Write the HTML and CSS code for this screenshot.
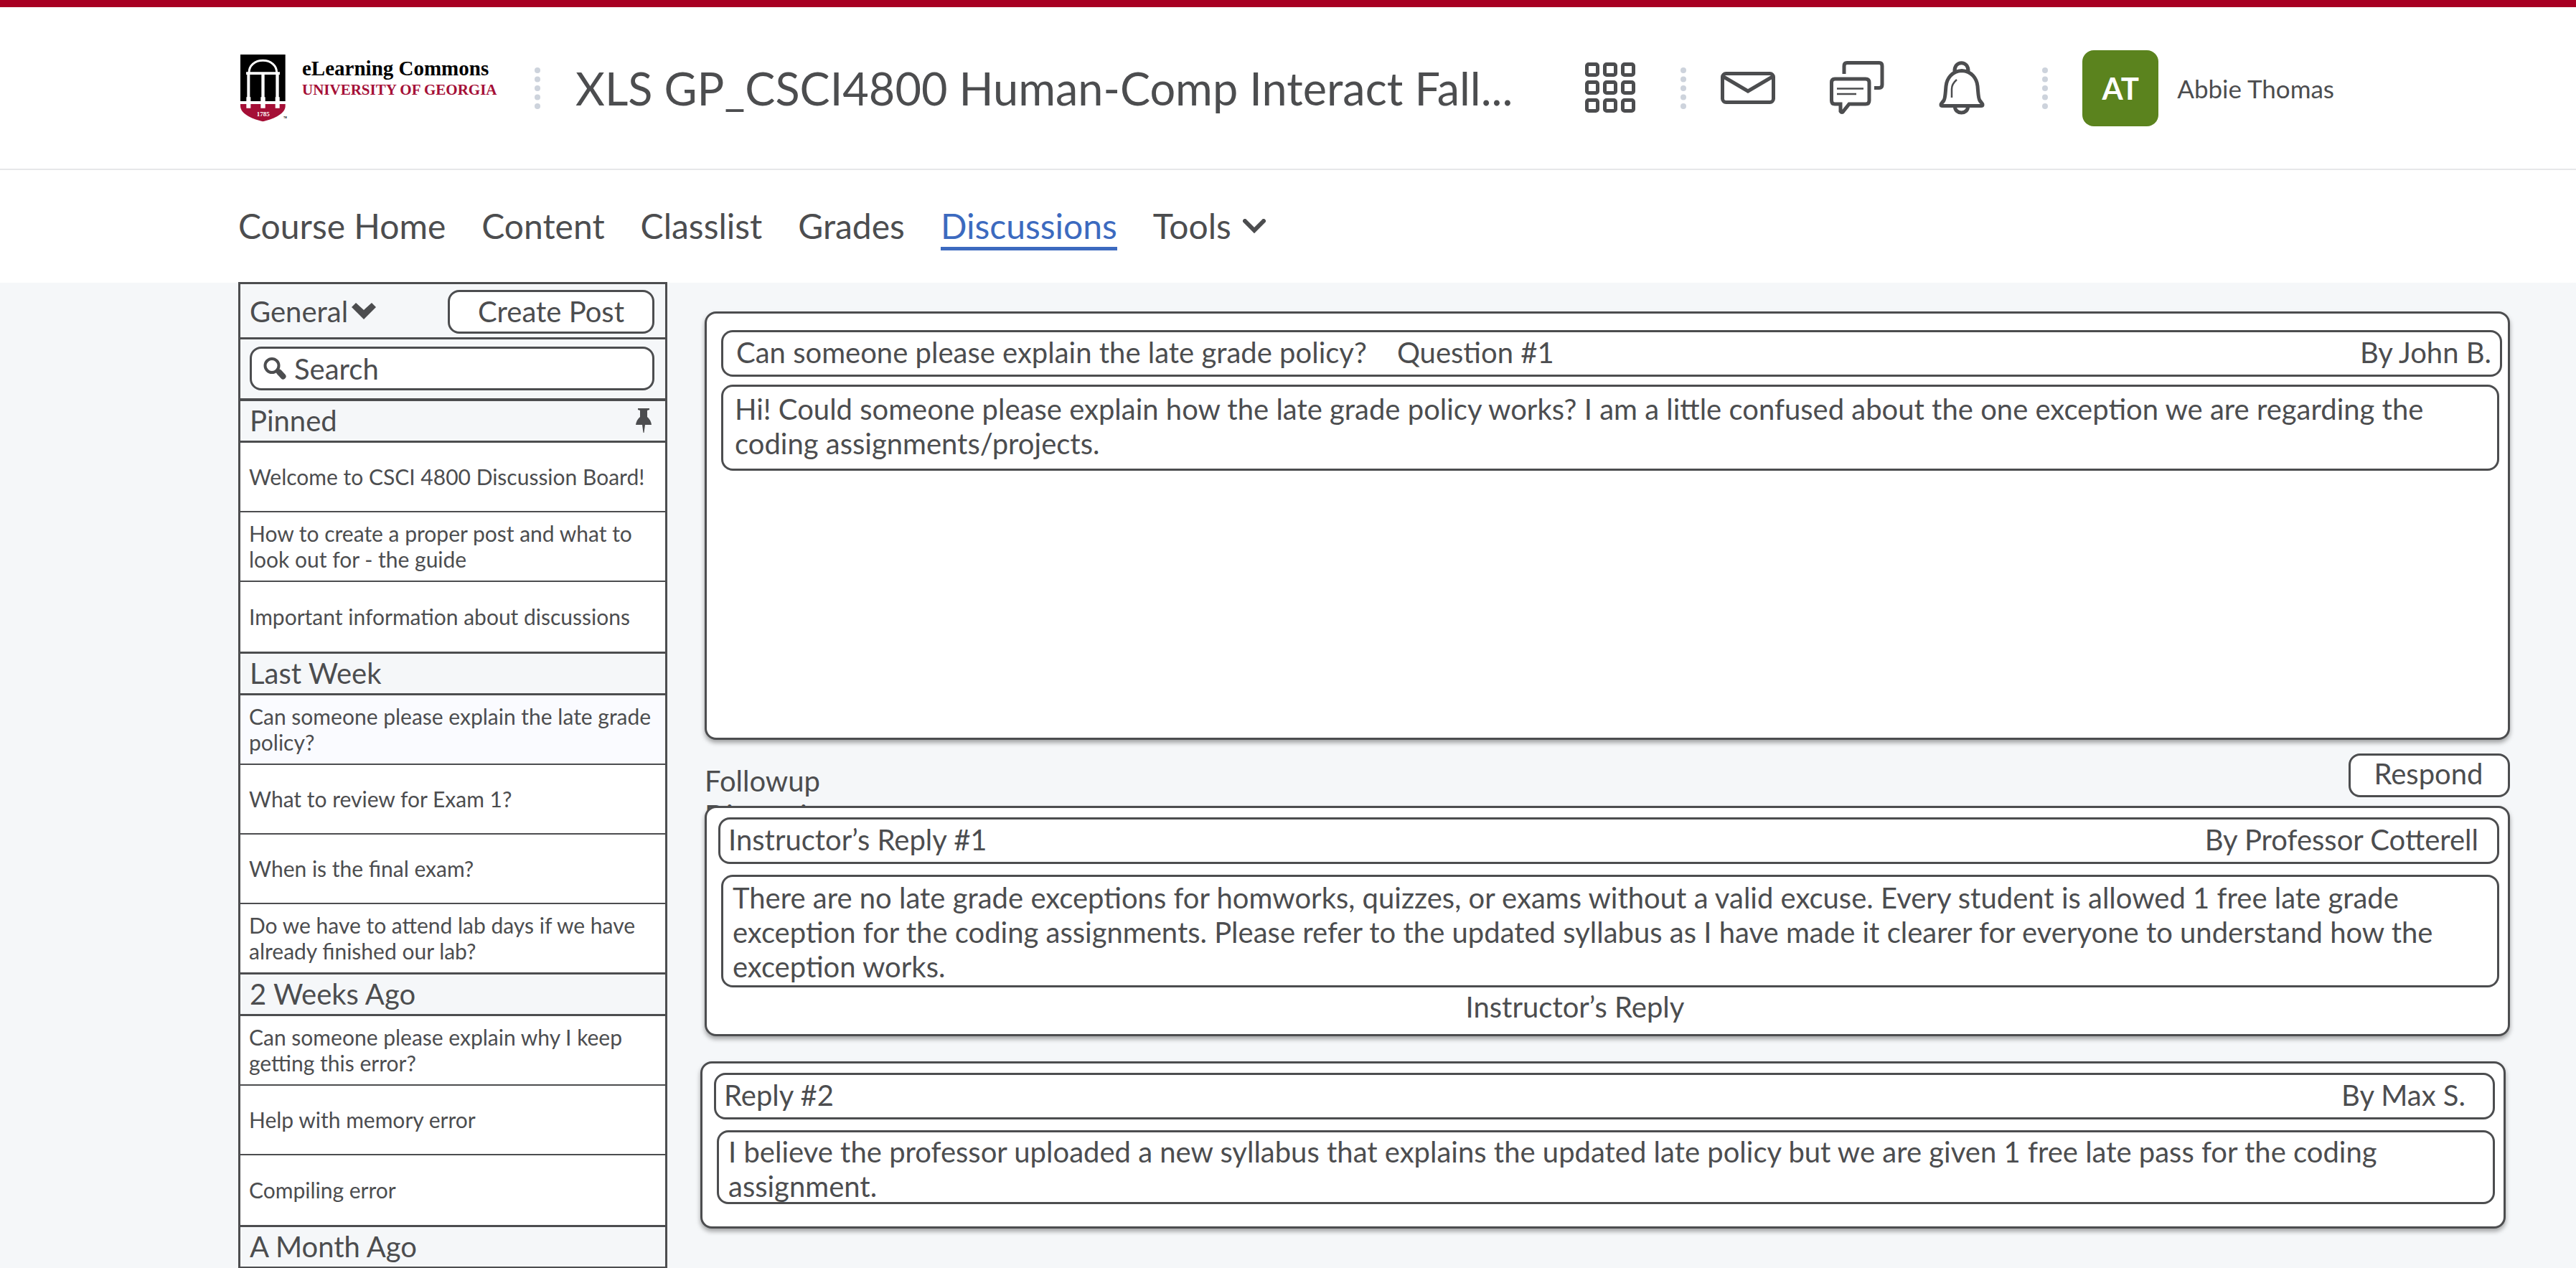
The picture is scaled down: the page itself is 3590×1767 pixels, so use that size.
FILE: index.html
```html
<!DOCTYPE html>
<html lang="en">
<head>
<meta charset="utf-8">
<title>Discussions - eLearning Commons</title>
<link rel="stylesheet" href="styles.css">
</head>
<body>
<header class="topbar">
  <a class="brand" href="#">
    <svg class="crest" viewBox="0 0 201 282" aria-hidden="true">
      <path d="M0 0H188V195H0Z" fill="#000"/>
      <path d="M0 207H188V216C188 250 130 272 94 280C58 272 0 250 0 216Z" fill="#a50f36"/>
      <path d="M36 76C36 46 60 25 94 25S152 46 152 76" fill="none" stroke="#fff" stroke-width="9"/>
      <path d="M24 73H165V84H24ZM28 84H40V178H43V224H25V178H28ZM88 84H101V178H104V224H85V178H88ZM148 84H161V178H164V224H146V178H148Z" fill="#fff"/>
      <text x="95" y="259" text-anchor="middle" class="crest-year">1785</text>
      <text x="181" y="267" class="crest-tm">TM</text>
    </svg>
    <span class="brand-text">
      <span class="brand-name">eLearning Commons</span>
      <span class="brand-org">UNIVERSITY OF GEORGIA</span>
    </span>
  </a>
  <svg class="dots" viewBox="0 0 8 58" aria-hidden="true"><use href="#dots"/></svg>
  <h1 class="course">XLS GP_CSCI4800 Human-Comp Interact Fall...</h1>
  <div class="tools">
    <button class="icon-btn" aria-label="Select a course">
      <svg width="70" height="72" viewBox="0 0 70 72" fill="none" stroke="#4c4d4f" stroke-width="5">
        <rect x="2.500" y="2.500" width="15" height="15" rx="2.500"/><rect x="27.500" y="2.500" width="15" height="15" rx="2.500"/><rect x="52.500" y="2.500" width="15" height="15" rx="2.500"/>
        <rect x="2.500" y="27.500" width="15" height="15" rx="2.500"/><rect x="27.500" y="27.500" width="15" height="15" rx="2.500"/><rect x="52.500" y="27.500" width="15" height="15" rx="2.500"/>
        <rect x="2.500" y="52.500" width="15" height="15" rx="2.500"/><rect x="27.500" y="52.500" width="15" height="15" rx="2.500"/><rect x="52.500" y="52.500" width="15" height="15" rx="2.500"/>
      </svg>
    </button>
    <svg class="dots" viewBox="0 0 8 58" aria-hidden="true">
      <g id="dots" fill="#cdd3dc"><circle cx="4" cy="4" r="4"/><circle cx="4" cy="16.500" r="4"/><circle cx="4" cy="29" r="4"/><circle cx="4" cy="41.500" r="4"/><circle cx="4" cy="54" r="4"/></g>
    </svg>
    <div class="alerts">
      <button class="icon-btn" aria-label="Messages">
        <svg width="76" height="76" viewBox="0 0 76 76" fill="none" stroke="#4c4d4f" stroke-width="5">
          <rect x="2.500" y="17.500" width="71" height="40" rx="5"/><path d="M4 22L38 42L72 22"/>
        </svg>
      </button>
      <button class="icon-btn" aria-label="Discussions updates">
        <svg width="76" height="76" viewBox="0 0 76 76" fill="none" stroke="#4c4d4f" stroke-width="5">
          <path d="M20 18V7Q20 2.500 24 2.500H69Q73 2.500 73 7V33Q73 37.500 69 37.500H62"/>
          <path d="M7 25H50Q55 25 55 30V55Q55 60 50 60H27L19 70Q17 73 15 70V60H7Q2.500 60 2.500 55V30Q2.500 25 7 25Z"/>
          <path d="M10 38.500H47M10 46H37" stroke-width="2.500"/>
        </svg>
      </button>
      <button class="icon-btn" aria-label="Notifications">
        <svg width="64" height="76" viewBox="0 0 64 76" fill="none" stroke="#4c4d4f" stroke-width="5">
          <path d="M22 15C21 -1.500 42 -1.500 41 15"/>
          <path d="M32 13.500C46 14 53 25 54 35C55 46 55 52 57 55C59 58 61 59 61 61Q61 62.500 59 62.500H5Q3 62.500 3 61C3 59 5 58 7 55C9 52 9 46 10 35C11 25 18 14 32 13.500Z"/>
          <path d="M22.500 63C22 75 41 75 40.500 63"/>
          <path d="M25 26Q18 32 18 39V51" stroke-width="2.500"/>
        </svg>
      </button>
    </div>
    <svg class="dots" viewBox="0 0 8 58" aria-hidden="true"><use href="#dots"/></svg>
    <button class="profile"><span class="avatar">AT</span><span>Abbie Thomas</span></button>
  </div>
</header>
<nav class="nav" aria-label="Course">
  <a href="#">Course Home</a>
  <a href="#">Content</a>
  <a href="#">Classlist</a>
  <a href="#">Grades</a>
  <a href="#" class="current" aria-current="page">Discussions</a>
  <button class="nav-menu">Tools
    <svg width="32" height="20" viewBox="0 0 32 20" fill="none" stroke="#4c4d4f" stroke-width="6" stroke-linecap="round"><path d="M3 3L16 16L29 3"/></svg>
  </button>
</nav>
<div class="page">
  <aside class="sidebar">
    <div class="side-actions">
      <label class="board">
        <select class="board-select" aria-label="Board"><option>General</option></select>
        <svg width="34" height="24" viewBox="0 0 34 24" aria-hidden="true"><path d="M6 0L17 10L28 0L34 6L17 23L0 6Z" fill="#4c4d4f"/></svg>
      </label>
      <button class="btn btn-create">Create Post</button>
    </div>
    <div class="side-search">
      <label class="search">
        <svg width="32" height="31" viewBox="0 0 32 31" aria-hidden="true" fill="none" stroke="#4c4d4f"><circle cx="12" cy="11.500" r="9.500" stroke-width="4"/><path d="M18 18L22 21.500" stroke-width="4"/><path d="M22 20.500L27.500 26.500" stroke-width="8" stroke-linecap="round"/></svg>
        <input type="text" placeholder="Search" aria-label="Search">
      </label>
    </div>
    <section>
      <h2 class="group-title">Pinned
        <svg width="22" height="34" viewBox="0 0 22 34" aria-hidden="true"><path d="M3 0H19V2L16 3V12Q21 16 22 23H13L11.500 34H10.500L9 23H0Q1 16 6 12V3L3 2Z" fill="#4c4d4f"/></svg>
      </h2>
      <ul class="posts">
        <li><a href="#">Welcome to CSCI 4800 Discussion Board!</a></li>
        <li><a href="#">How to create a proper post and what to look out for - the guide</a></li>
        <li><a href="#">Important information about discussions</a></li>
      </ul>
    </section>
    <section>
      <h2 class="group-title">Last Week</h2>
      <ul class="posts">
        <li class="selected"><a href="#">Can someone please explain the late grade policy?</a></li>
        <li><a href="#">What to review for Exam 1?</a></li>
        <li><a href="#">When is the final exam?</a></li>
        <li><a href="#">Do we have to attend lab days if we have already finished our lab?</a></li>
      </ul>
    </section>
    <section>
      <h2 class="group-title">2 Weeks Ago</h2>
      <ul class="posts">
        <li><a href="#">Can someone please explain why I keep getting this error?</a></li>
        <li><a href="#">Help with memory error</a></li>
        <li><a href="#">Compiling error</a></li>
      </ul>
    </section>
    <section>
      <h2 class="group-title">A Month Ago</h2>
    </section>
  </aside>
  <main class="thread">
    <article class="card question">
      <header class="box box-head">
        <span>Can someone please explain the late grade policy?</span>
        <span>Question #1</span>
        <span class="author">By John B.</span>
      </header>
      <p class="box box-body">Hi! Could someone please explain how the late grade policy works? I am a little confused about the one exception we are regarding the coding assignments/projects.</p>
    </article>
    <div class="followup">
      <h2 class="followup-title">Followup Discussion</h2>
      <button class="btn btn-respond">Respond</button>
    </div>
    <article class="card reply">
      <header class="box box-head">
        <span>Instructor’s Reply #1</span>
        <span class="author">By Professor Cotterell</span>
      </header>
      <p class="box box-body">There are no late grade exceptions for homworks, quizzes, or exams without a valid excuse. Every student is allowed 1 free late grade exception for the coding assignments. Please refer to the updated syllabus as I have made it clearer for everyone to understand how the exception works.</p>
      <p class="reply-note">Instructor’s Reply</p>
    </article>
    <article class="card reply reply-student">
      <header class="box box-head">
        <span>Reply #2</span>
        <span class="author">By Max S.</span>
      </header>
      <p class="box box-body">I believe the professor uploaded a new syllabus that explains the updated late policy but we are given 1 free late pass for the coding assignment.</p>
    </article>
  </main>
</div>
</body>
</html>
```

FILE: styles.css
```css
* { box-sizing: border-box; }

body {
  margin: 0;
  background: #f5f7f9;
  color: #4c4d4f;
  font-family: Lato, sans-serif;
  font-size: 40px;
  line-height: 48px;
}

h1, h2, p, ul { margin: 0; padding: 0; font-weight: 400; font-size: inherit; }
ul { list-style: none; }
a { color: inherit; text-decoration: none; }
svg { display: block; flex: none; }

button, input, select {
  font: inherit;
  color: inherit;
  margin: 0;
  padding: 0;
  border: 0;
  background: none;
}

/* Top bar */
.topbar {
  display: flex;
  align-items: center;
  min-height: 237px;
  padding: 0 337px 0 332px;
  background: #fff;
  border-top: 10px solid #a80022;
  border-bottom: 2px solid #e6e7e9;
}

.brand { display: flex; gap: 19px; padding-left: 3px; width: 413px; }
.crest { width: 67px; height: 94px; }
.crest-year { font: bold 27px "Liberation Serif", serif; fill: #fff; }
.crest-tm { font: bold 9px "Liberation Sans", sans-serif; fill: #000; }
.brand-text { display: flex; flex-direction: column; font-family: "Liberation Serif", serif; font-weight: 700; white-space: nowrap; }
.brand-name { font-size: 29px; line-height: 36px; color: #000; padding-top: 1px; }
.brand-org { font-size: 21px; line-height: 24px; color: #a50f36; }

.dots { width: 8px; height: 58px; }

.course {
  flex: 1;
  min-width: 0;
  margin-left: 49px;
  font-size: 63px;
  line-height: 76px;
  white-space: nowrap;
}

.tools { display: flex; align-items: center; }
.icon-btn { display: block; flex: none; }
.tools > .icon-btn { margin-right: 63px; }
.alerts { display: flex; gap: 76px; margin: 0 80px 0 48px; }
.profile { display: flex; align-items: center; gap: 26px; margin-left: 48px; font-size: 35px; white-space: nowrap; }
.avatar {
  display: grid;
  place-items: center;
  width: 106px;
  height: 106px;
  border-radius: 16px;
  background: #5b831e;
  color: #fff;
  font-size: 42px;
  font-weight: 700;
}

/* Course navigation */
.nav {
  display: flex;
  align-items: center;
  gap: 50px;
  min-height: 157px;
  padding: 0 332px 2px;
  background: #fff;
  font-size: 48px;
  line-height: 58px;
  white-space: nowrap;
}
.current { color: #3c6abf; border-bottom: 5px solid #3c6abf; margin-top: 5px; }
.nav-menu { display: flex; align-items: center; gap: 16px; }

/* Page body */
.page { display: flex; align-items: flex-start; gap: 46px; padding: 0 92px 0 332px; }

/* Sidebar */
.sidebar { flex: none; width: 598px; margin-top: -1px; border: 3px solid #4c4d4f; border-bottom: 0; }
.side-actions { display: flex; align-items: center; justify-content: space-between; height: 74px; padding: 2px 15px 0 13px; }
.board { display: flex; align-items: center; gap: 4px; }
.board-select { appearance: none; cursor: pointer; height: 48px; }
.btn { height: 61px; border: 3px solid #4c4d4f; border-radius: 16px; background: #fff; text-align: center; }
.btn-create { width: 288px; }
.side-search { border-top: 3px solid #4c4d4f; border-bottom: 1px solid #4c4d4f; padding: 10px 15px 11px 13px; }
.search { display: flex; align-items: center; gap: 11px; height: 61px; padding: 0 16px; border: 3px solid #4c4d4f; border-radius: 16px; background: #fff; }
.search input { flex: 1; min-width: 0; height: 48px; outline: 0; }
.search input::placeholder { color: inherit; opacity: 1; }

.group-title {
  display: flex;
  align-items: center;
  justify-content: space-between;
  height: 61px;
  padding: 0 19px 2px 13px;
  border: solid #4c4d4f;
  border-width: 3px 0;
}
.posts { display: flex; flex-direction: column; min-height: 291px; font-size: 30px; line-height: 36px; }
.posts li { min-height: 95px; display: flex; align-items: center; padding: 0 12px 2px; background: #fff; }
.posts li + li { border-top: 2px solid #4c4d4f; min-height: 97px; }
.posts li:last-child { flex: 1 0 auto; }
.posts .selected { background: #fafbff; }

/* Thread */
.thread { flex: 1; min-width: 0; padding-top: 40px; }
.card {
  position: relative;
  margin-left: 6px;
  background: #fff;
  border: 3px solid #4c4d4f;
  border-radius: 16px;
  box-shadow: 0 4px 6px rgba(0, 0, 0, .35);
}
.box { border: 3px solid #4c4d4f; border-radius: 16px; background: #fff; }
.box-head { display: flex; align-items: center; height: 65px; padding: 0 12px 4px 11px; }
.author { margin-left: auto; }

.question { min-height: 597px; padding: 23px 8px 0 20px; }
.question .box-head { gap: 42px; padding-left: 18px; }
.question .box-body { margin: 11px 4px 0 0; padding: 7px 16px 11px; }

.followup { display: flex; justify-content: space-between; align-items: flex-start; height: 92px; padding: 19px 0 0 6px; }
.followup-title { width: 200px; height: 48px; margin-top: 14px; }
.btn-respond { width: 225px; padding: 0 2px 6px 0; }

.reply { padding: 13px 12px 14px 16px; }
.reply .box-head { padding-right: 26px; }
.reply .box-body { margin: 15px 0 0 4px; padding: 5px 13px 2px; }
.reply-note { margin: 3px 94px 0 0; text-align: center; }

.reply-student { margin: 35px 6px 0 0; padding-bottom: 31px; }
.reply-student .box-head { padding-right: 38px; }
.reply-student .box-body { height: 103px; padding: 3px 13px 0; }
```
